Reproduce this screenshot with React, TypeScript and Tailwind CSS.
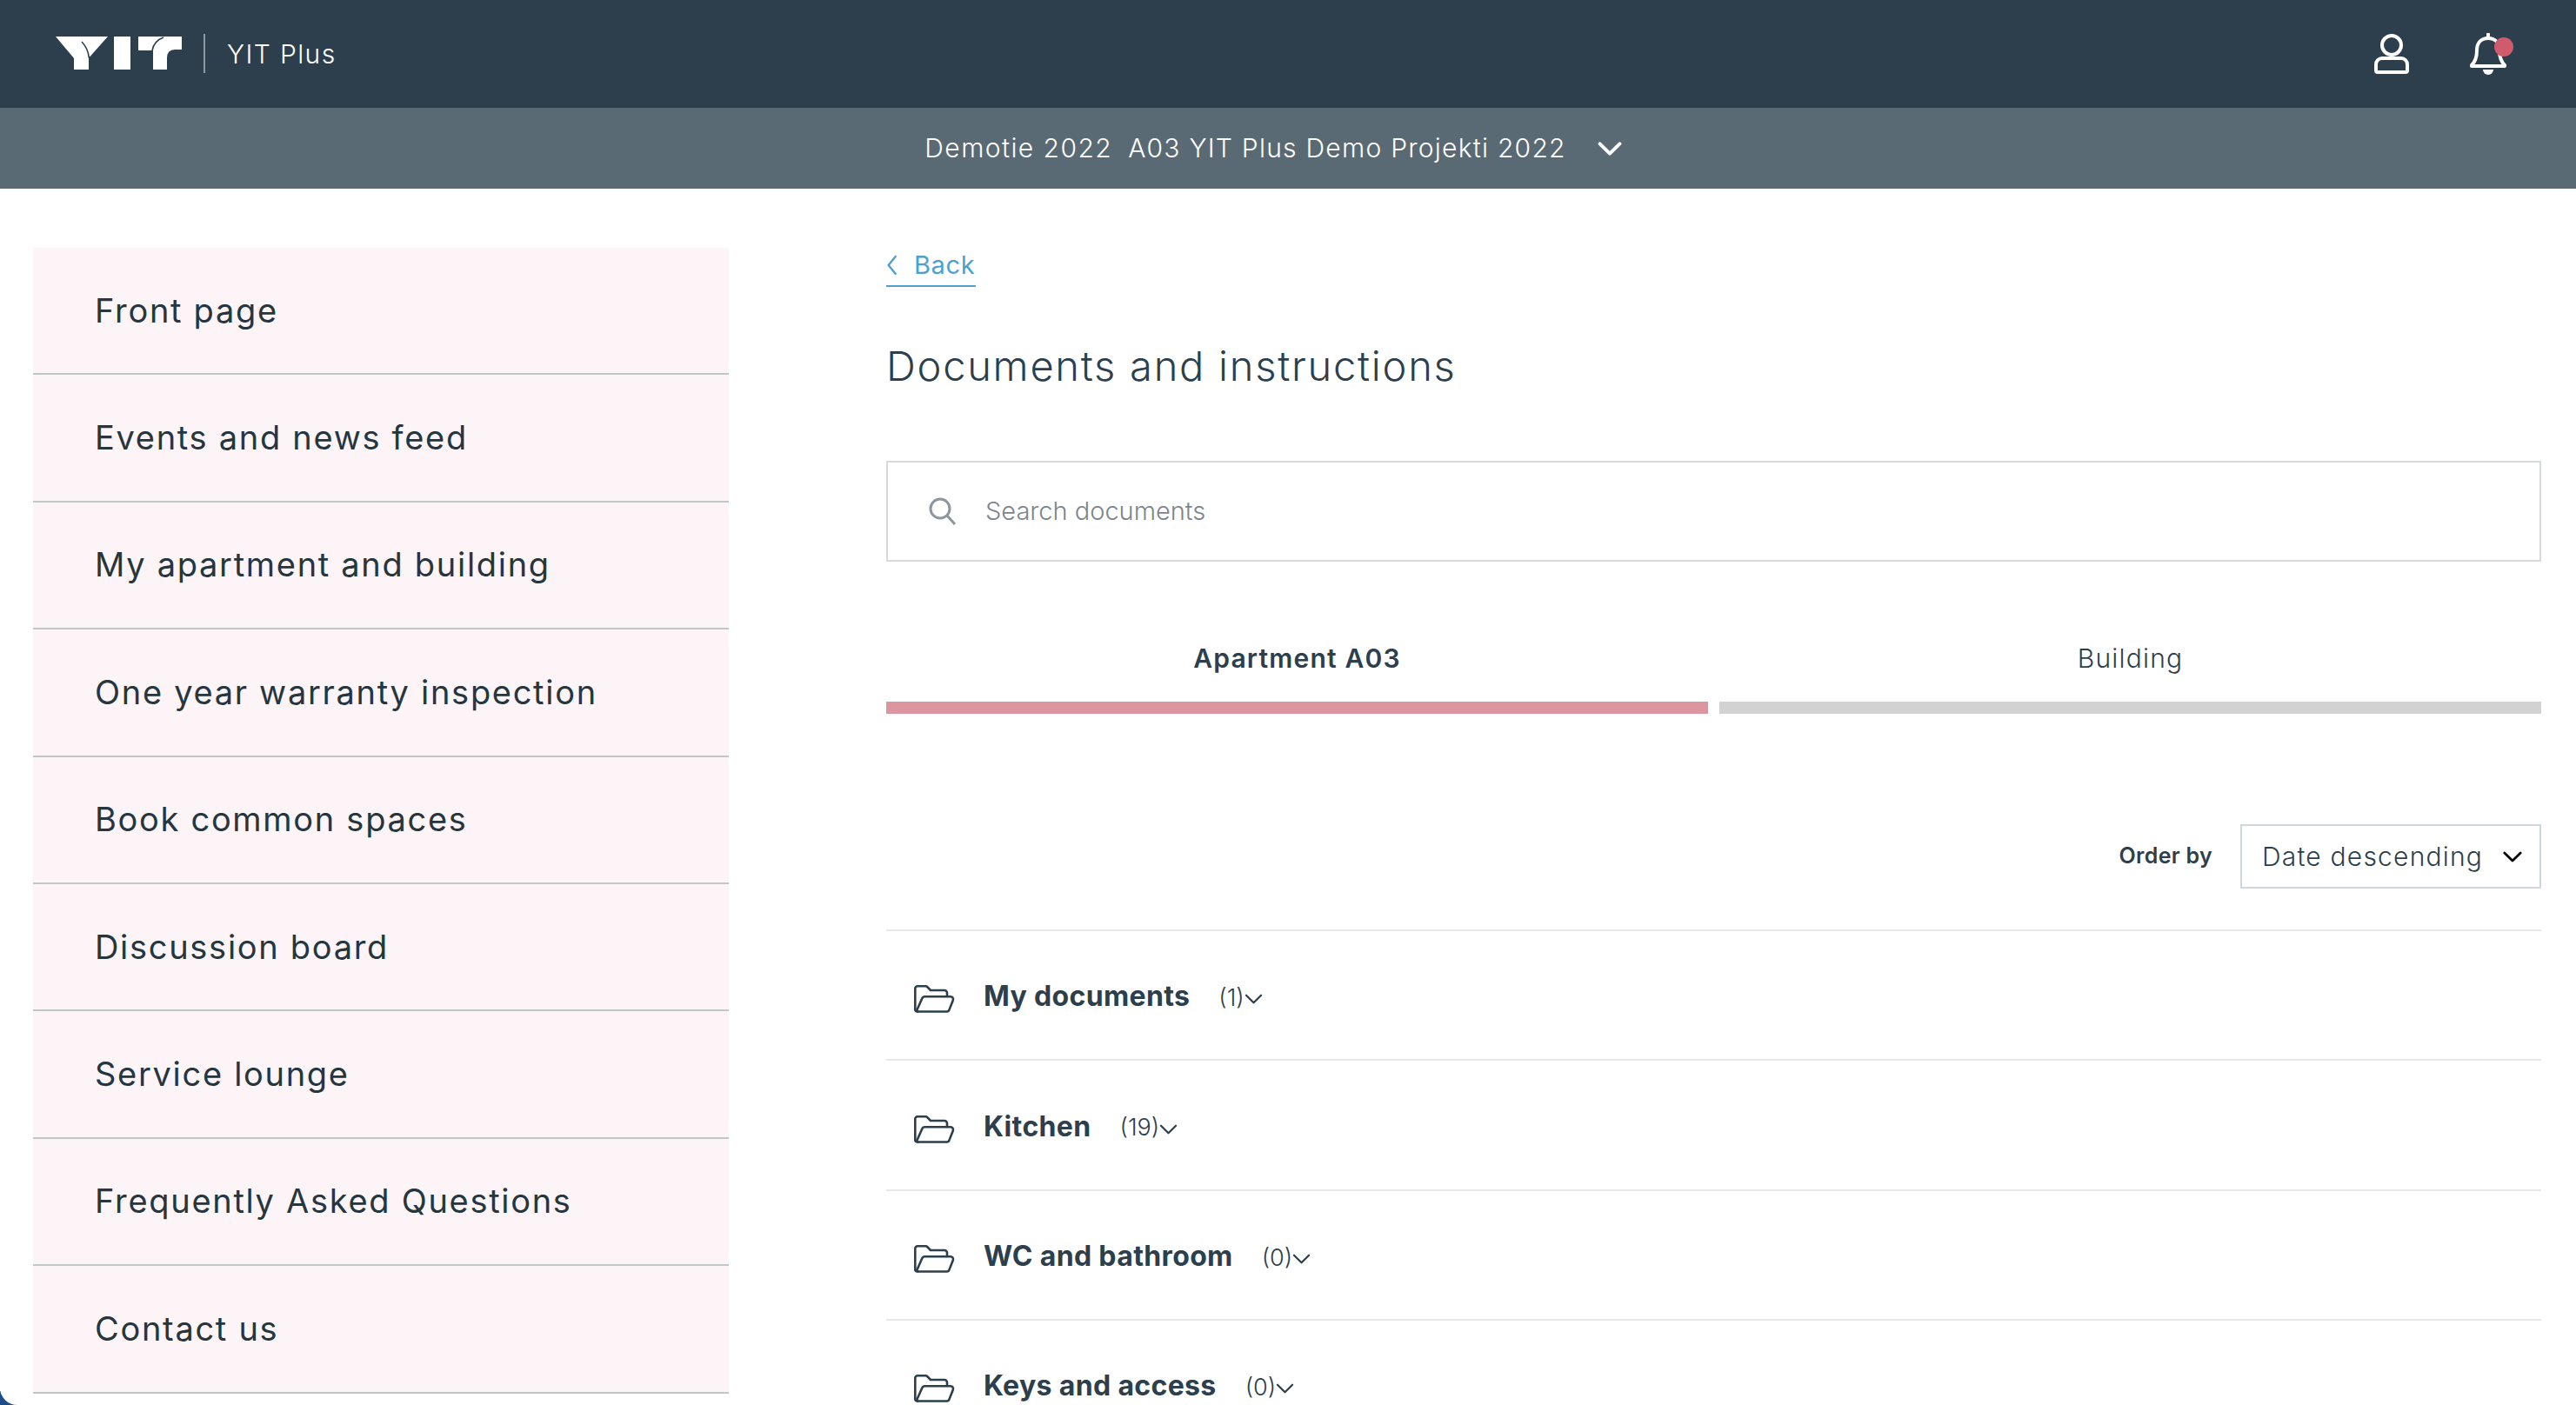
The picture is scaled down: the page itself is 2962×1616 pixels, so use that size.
import React from "react";

const F = "font-['Inter',sans-serif]";
const nav = ["Front page","Events and news feed","My apartment and building","One year warranty inspection","Book common spaces","Discussion board","Service lounge","Frequently Asked Questions","Contact us"];
const rows = [["My documents","(1)"],["Kitchen","(19)"],["WC and bathroom","(0)"],["Keys and access","(0)"]];

function Chev({ className = "", w = 3 }: { className?: string; w?: number }) {
  return <svg viewBox="0 0 24 14" className={className} fill="none" stroke="currentColor" strokeWidth={w} strokeLinecap="round" strokeLinejoin="round"><path d="M2 2l10 10L22 2" /></svg>;
}

function Folder() {
  return (
    <svg viewBox="0 0 47 32" className="w-[47px] h-[32px] shrink-0 mt-[6px]" fill="none" stroke="#2d3f4c" strokeWidth="2.6" strokeLinejoin="round" strokeLinecap="round">
      <path d="M4.5 30.5h-1A2.2 2.2 0 0 1 1.3 28V4A2.7 2.7 0 0 1 4 1.3h9.5a2.5 2.5 0 0 1 1.8.8l3.7 3.9h16a3 3 0 0 1 3 3V13" />
      <path d="M3 29.5l6.2-14A3.5 3.5 0 0 1 12.5 13.300h29.500a3 3 0 0 1 2.800 4.100l-4.300 11a3 3 0 0 1-2.800 2.100H4.500" />
    </svg>
  );
}

export default function App() {
  return (
    <div className={`relative w-full h-[1616px] overflow-hidden bg-white text-[#2d3f4c] ${F}`}>
      <header className="h-[124px] bg-[#2d3f4c] flex items-center pl-[64px] pr-[80px] pb-[2px] text-white">
        <svg viewBox="0 0 145 38" className="w-[145px] h-[38px] shrink-0" fill="#fff">
          <path d="M0 0H60L39.500 23H38V38H21V25Z" />
          <path d="M30 6Q37 13 38.500 25" fill="none" stroke="#2d3f4c" strokeWidth="1.600" />
          <path d="M67 0h19v38H67Z" />
          <path d="M95 0H145V15H137Q128 15 128 25V38H112V16H95Z" />
          <path d="M111 16Q113 5 124 1" fill="none" stroke="#2d3f4c" strokeWidth="1.600" />
        </svg>
        <div className="w-[2px] h-[45px] bg-[#8c99a3] ml-[25px] mr-[25px]" />
        <span className="text-[30px] font-light tracking-[1.4px] mt-[2px]">YIT Plus</span>
        <div className="ml-auto flex items-center gap-[70px] mt-[2px]">
          <svg viewBox="0 0 40 46" className="w-[40px] h-[46px]" fill="none" stroke="#fff" strokeWidth="4">
            <circle cx="20" cy="13" r="11" />
            <path d="M9 28h22a7 7 0 0 1 7 7v7a2 2 0 0 1-2 2H4a2 2 0 0 1-2-2v-7a7 7 0 0 1 7-7Z" />
          </svg>
          <div className="relative w-[42px] h-[48px]">
            <svg viewBox="0 0 42 48" className="w-[42px] h-[48px]" fill="none" stroke="#fff" strokeWidth="4" strokeLinejoin="round">
              <path d="M21 6C12 6 8 12 8 20c0 8-2 13-6 17v1h38v-1c-4-4-6-9-6-17 0-8-4-14-13-14Z" />
              <path d="M21 1v5" strokeLinecap="round" />
              <path d="M15 42h12a6 6 0 0 1-12 0Z" fill="#fff" stroke="none" />
            </svg>
            <div className="absolute left-[28px] top-[5px] w-[22px] h-[22px] rounded-full bg-[#cf5b6d]" />
          </div>
        </div>
      </header>
      <div className="h-[93px] bg-[#5a6a75] flex items-center justify-center text-white pr-[34px]">
        <span className="text-[30px] font-light tracking-[1.450px] whitespace-pre">Demotie 2022</span>
        <span className="ml-[18px] text-[30px] font-light tracking-[1.250px] whitespace-pre">A03 YIT Plus Demo Projekti 2022</span>
        <Chev className="w-[28px] h-[16px] ml-[36px]" w={3.4} />
      </div>
      <div className="flex pt-[68px] pl-[38px] pr-[40px]">
        <nav className="w-[800px] shrink-0">
          {nav.map((n) => (
            <div key={n} className="h-[146.400px] flex items-center pl-[71px] bg-[#fcf4f6] border-b-2 border-[#bfc7c9] text-[38px] tracking-[1.700px] font-normal text-[#26363f]">{n}</div>
          ))}
        </nav>
        <main className="ml-[181px] flex-1 flex flex-col">
          <a className="self-start flex items-center gap-[18px] h-[45px] border-b-2 border-[#4f9fcf] text-[#4f9fcf] text-[29px] tracking-[0.6px] w-[103px] pb-[4px]">
            <svg viewBox="0 0 12 24" className="w-[14px] h-[26px] shrink-0" fill="none" stroke="currentColor" strokeWidth="2.200"><path d="M10 2 2 12l8 10" /></svg>
            Back
          </a>
          <h1 className="mt-[61px] text-[47px] leading-[60px] font-light tracking-[1.750px]">Documents and instructions</h1>
          <div className="mt-[79px] h-[116px] border-2 border-[#d5d9db] flex items-center pl-[46px]">
            <svg viewBox="0 0 34 34" className="w-[34px] h-[34px] shrink-0" fill="none" stroke="#8d969d" strokeWidth="3"><circle cx="14" cy="14" r="11" /><path d="m22 22 9 10" /></svg>
            <span className="ml-[32px] text-[29px] font-light text-[#7c858c]">Search documents</span>
          </div>
          <div className="mt-[91px] grid grid-cols-2 gap-[13px]">
            <div>
              <div className="text-center text-[30px] font-semibold tracking-[1.200px] leading-[40px]">Apartment A03</div>
              <div className="mt-[30px] h-[14px] bg-[#dd959f]" />
            </div>
            <div>
              <div className="text-center text-[30px] font-light tracking-[1.200px] leading-[40px]">Building</div>
              <div className="mt-[30px] h-[14px] bg-[#d2d2d2]" />
            </div>
          </div>
          <div className="mt-[127px] flex items-center justify-end">
            <span className="text-[25px] font-semibold tracking-[0.300px]">Order by</span>
            <div className="ml-[32px] w-[346px] h-[74px] border-2 border-[#d0d7da] flex items-center pl-[23px]">
              <span className="text-[30px] font-light tracking-[1.200px]">Date descending</span>
              <Chev className="ml-auto mr-[20px] w-[22px] h-[13px] text-black" w={3} />
            </div>
          </div>
          <div className="mt-[47px]">
            {rows.map(([t, c]) => (
              <div key={t} className="h-[149.400px] border-t-2 border-[#e8e8e8] flex items-center pl-[32px] pt-[3px]">
                <Folder />
                <span className="ml-[33px] text-[32px] font-bold tracking-[0.350px]">{t}</span>
                <span className="ml-[33px] text-[27px] font-light mt-[4px]">{c}</span>
                <Chev className="w-[21px] h-[12px] mt-[6px]" w={2.6} />
              </div>
            ))}
          </div>
        </main>
      </div>
      <div className="absolute left-0 bottom-0 w-[22px] h-[16px] bg-[#1d4e89] overflow-hidden">
        <div className="w-[40px] h-[40px] rounded-full bg-white -mt-[24px]" />
      </div>
    </div>
  );
}
